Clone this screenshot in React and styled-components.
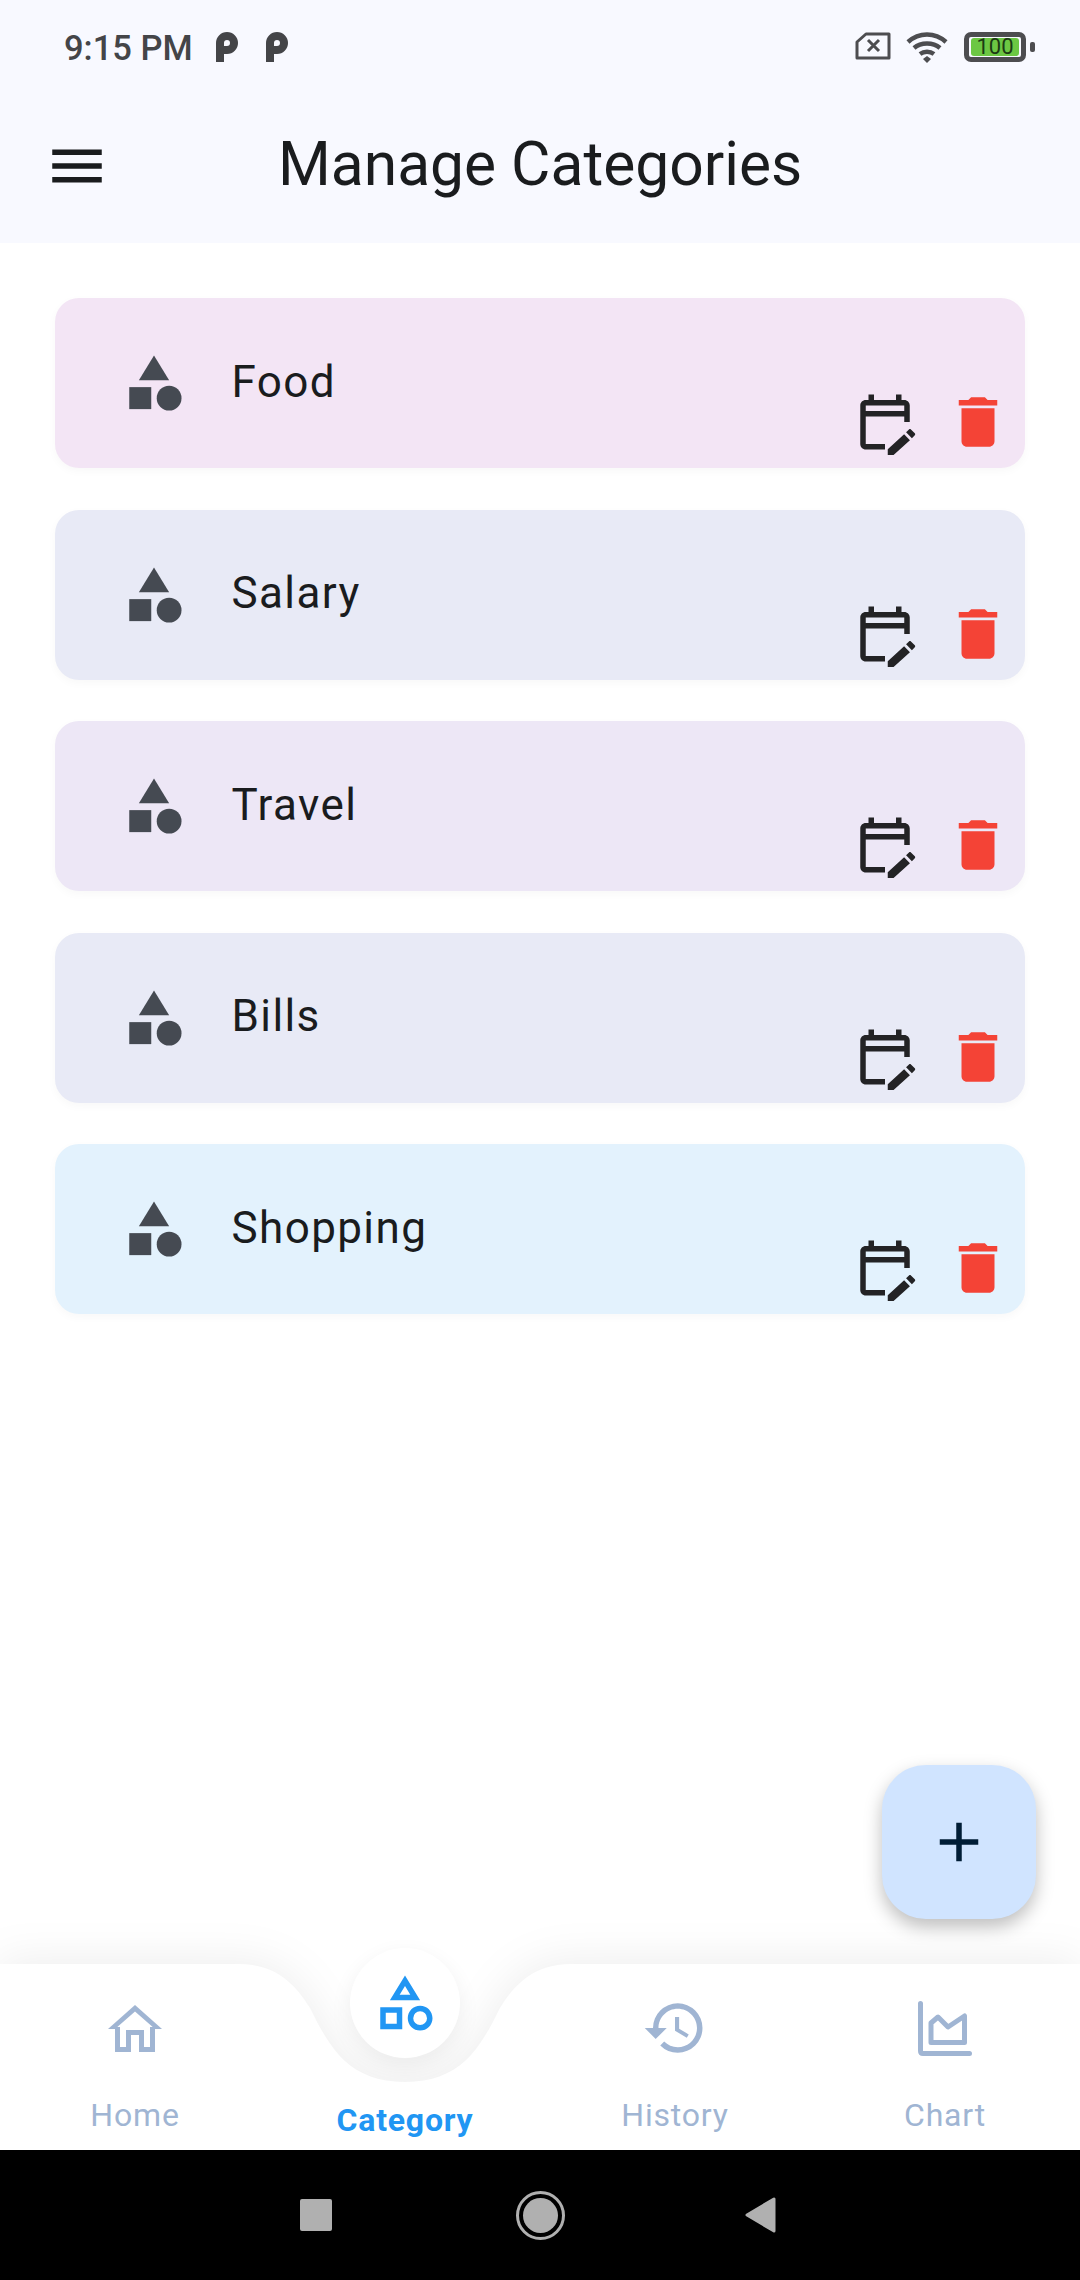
import styled, { createGlobalStyle } from "styled-components";
import {
  MdAdd,
  MdCategory,
  MdDelete,
  MdHistory,
  MdMenu,
  MdOutlineCategory,
} from "react-icons/md";

const GlobalStyle = createGlobalStyle`
  html, body {
    margin: 0;
    padding: 0;
    background: #fff;
  }
  * {
    box-sizing: border-box;
  }
`;

const Screen = styled.div`
  width: 1080px;
  height: 2280px;
  display: flex;
  flex-direction: column;
  overflow: hidden;
  font-family: Roboto, "Liberation Sans", sans-serif;
  background: #fff;
`;

const Header = styled.header`
  height: 243px;
  background: #f8f9ff;
  flex-shrink: 0;
`;

const StatusBar = styled.div`
  height: 88px;
  padding: 32px 47px 0 64px;
  display: flex;
  align-items: flex-start;
`;

const Time = styled.span`
  font-size: 34.5px;
  line-height: 32px;
  font-weight: 500;
  color: #444548;
  margin-right: 23px;
`;

const AppLogo = styled.svg`
  width: 22px;
  height: 30px;
  margin-right: 28px;
  flex-shrink: 0;
`;

const StatusIcons = styled.div`
  margin-left: auto;
  display: flex;
  align-items: flex-start;
  gap: 15px;
`;

const Battery = styled.div`
  position: relative;
  width: 62px;
  height: 30px;
  border: 5px solid #4d4d50;
  border-radius: 7px;
  margin-left: 1px;
  margin-right: 7px;
  padding: 1px 2px;
  display: flex;

  &::after {
    content: "";
    position: absolute;
    right: -14px;
    top: 5px;
    width: 5px;
    height: 10px;
    border-radius: 2px;
    background: #4d4d50;
  }
`;

const BatteryLevel = styled.div`
  flex: 1;
  background: #6cc743;
  border-radius: 3px;
  color: #1c3a14;
  font-size: 22px;
  line-height: 18px;
  text-align: center;
`;

const AppBar = styled.div`
  height: 155px;
  padding-left: 44px;
  display: flex;
  align-items: center;
  color: #1a1c1e;
  font-size: 66px;
`;

const MenuIcon = styled(MdMenu)`
  flex-shrink: 0;
`;

const Title = styled.h1`
  margin: 0 0 2px 168px;
  font-size: 60.5px;
  line-height: 80px;
  font-weight: 400;
  color: #1a1c1e;
`;

const Main = styled.main`
  position: relative;
  flex: 1;
  padding: 55px 55px 0;
  display: flex;
  flex-direction: column;
  gap: 41.5px;
`;

const Card = styled.div`
  height: 170px;
  flex-shrink: 0;
  padding: 0 14px 0 66px;
  display: flex;
  align-items: center;
  border-radius: 24px;
  background: ${(p) => p.$bg};
  box-shadow: 0 3px 10px rgba(0, 0, 0, 0.03);
`;

const CardIcon = styled(MdCategory)`
  color: #454a52;
  font-size: 66px;
  flex-shrink: 0;
`;

const CardName = styled.span`
  margin: 0 0 3px 44.5px;
  font-size: 44px;
  line-height: 60px;
  letter-spacing: 1.4px;
  color: #1a1c1e;
`;

const Actions = styled.div`
  margin-left: auto;
  align-self: flex-end;
  padding-bottom: 13px;
  display: flex;
  gap: 27px;
`;

const EditIcon = styled.svg`
  width: 66px;
  height: 66px;
  fill: #232325;
  display: block;
`;

const DeleteIcon = styled(MdDelete)`
  font-size: 66px;
  color: #f44336;
  display: block;
`;

const Fab = styled.button`
  position: absolute;
  right: 44px;
  bottom: 45px;
  width: 154px;
  height: 154px;
  border: 0;
  padding: 0;
  border-radius: 44px;
  background: #d0e4ff;
  color: #001d36;
  font-size: 66px;
  display: flex;
  align-items: center;
  justify-content: center;
  box-shadow: 0 8px 18px rgba(0, 0, 0, 0.26);
`;

const NavBar = styled.nav`
  position: relative;
  height: 186px;
  flex-shrink: 0;
  display: grid;
  grid-template-columns: repeat(4, 270px);
`;

const NavShape = styled.svg`
  position: absolute;
  left: 0;
  top: 0;
  width: 1080px;
  height: 186px;
  overflow: visible;
  filter: drop-shadow(0 -3px 22px rgba(0, 0, 0, 0.07));
`;

const NavItem = styled.div`
  position: relative;
  display: flex;
  flex-direction: column;
  align-items: center;
  padding-top: ${(p) => (p.$active ? "0" : "31px")};
`;

const NavIconBox = styled.div`
  width: 66px;
  height: 66px;
  display: flex;
  align-items: center;
  justify-content: center;
  color: #a0b5d3;
  font-size: 66px;
`;

const Bubble = styled.div`
  width: 110px;
  height: 110px;
  margin-top: -16px;
  border-radius: 50%;
  background: #fff;
  color: #2196f3;
  font-size: 66px;
  display: flex;
  align-items: center;
  justify-content: center;
  box-shadow: 0 8px 22px rgba(0, 0, 0, 0.07);
`;

const NavLabel = styled.span`
  margin-top: ${(p) => (p.$active ? "44px" : "36px")};
  font-size: 32px;
  line-height: 36px;
  letter-spacing: 0.8px;
  font-weight: ${(p) => (p.$active ? 700 : 400)};
  color: ${(p) => (p.$active ? "#2196f3" : "#a0b5d3")};
`;

const SystemBar = styled.div`
  height: 130px;
  flex-shrink: 0;
  background: #000;
  display: flex;
  align-items: center;
  padding-left: 300px;
`;

const RecentsKey = styled.div`
  width: 32px;
  height: 32px;
  border-radius: 2px;
  background: #b0b0b0;
`;

const HomeKey = styled.div`
  width: 49px;
  height: 49px;
  margin-left: 184px;
  border: 3px solid #b0b0b0;
  border-radius: 50%;
  padding: 4px;

  &::after {
    content: "";
    display: block;
    width: 100%;
    height: 100%;
    border-radius: 50%;
    background: #b0b0b0;
  }
`;

const BackKey = styled.svg`
  width: 31px;
  height: 36px;
  margin-left: 180px;
`;

const CATEGORIES = [
  { name: "Food", bg: "#f3e5f5" },
  { name: "Salary", bg: "#e8eaf6" },
  { name: "Travel", bg: "#ede7f6" },
  { name: "Bills", bg: "#e8eaf6" },
  { name: "Shopping", bg: "#e3f2fd" },
];

const NOTCH_PATH =
  "M0 0H238C278 0 296 22 310 44C330 85 350 118 405 118C460 118 480 85 500 44C514 22 532 0 572 0H1080V186H0Z";

const EDIT_CALENDAR_PATH =
  "M5 10h14v2h2V6c0-1.1-.9-2-2-2h-1V2h-2v2H8V2H6v2H5c-1.11 0-1.99.9-1.99 2L3 20c0 1.1.89 2 2 2h7v-2H5V10zm0-4h14v2H5V6zm17.84 10.83l-1.06 1.06-2.12-2.12 1.06-1.06c.2-.2.51-.2.71 0l1.41 1.41c.2.2.2.51 0 .71zm-3.89-.35l2.12 2.12L15.12 24H13v-2.12l5.95-5.4z";

const Logo = () => (
  <AppLogo viewBox="0 0 22 30">
    <path
      d="M4 30V11a7 7 0 1 1 7 7H8"
      fill="none"
      stroke="#444548"
      strokeWidth="8"
    />
  </AppLogo>
);

const SimIcon = () => (
  <svg width="36" height="28" viewBox="0 0 36 28">
    <path
      d="M11 2H34V26H2V10Z"
      fill="none"
      stroke="#4d4d50"
      strokeWidth="3"
      strokeLinejoin="round"
    />
    <path
      d="M13 8L24 19M24 8L13 19"
      stroke="#4d4d50"
      strokeWidth="3"
      fill="none"
    />
  </svg>
);

const WifiIcon = () => (
  <svg width="42" height="31" viewBox="0 0 42 31">
    <g fill="none" stroke="#4d4d50" strokeWidth="4.5">
      <path d="M2 10C13 0 29 0 40 10" />
      <path d="M8 16C15 10 27 10 34 16" />
      <path d="M14 22C18 19 24 19 28 22" />
    </g>
    <path d="M17 27L21 24L25 27L21 31Z" fill="#4d4d50" />
  </svg>
);

const HomeIcon = () => (
  <svg width="54" height="47" viewBox="0 0 54 47">
    <path d="M27 0L54 24H47L27 6.5L7 24H0Z" fill="currentColor" />
    <path
      d="M9.5 22V44.5H20.5V27.5H33.5V44.5H44.5V22"
      fill="none"
      stroke="currentColor"
      strokeWidth="5"
    />
  </svg>
);

const ChartIcon = () => (
  <svg width="54" height="55" viewBox="0 0 54 55">
    <g
      fill="none"
      stroke="currentColor"
      strokeWidth="5"
      strokeLinecap="round"
      strokeLinejoin="round"
    >
      <path d="M2.5 2.5V50C2.5 51.5 3.5 52.5 5 52.5H51.5" />
      <path d="M13 41.5V22L20 16L30 26L46.5 15V41.5Z" />
    </g>
  </svg>
);

const NAV_ITEMS = [
  { label: "Home", icon: <HomeIcon /> },
  { label: "Category", icon: <MdOutlineCategory />, active: true },
  { label: "History", icon: <MdHistory /> },
  { label: "Chart", icon: <ChartIcon /> },
];

const App = () => {
  return (
    <>
      <GlobalStyle />
      <Screen>
        <Header>
          <StatusBar>
            <Time>9:15 PM</Time>
            <Logo />
            <Logo />
            <StatusIcons>
              <SimIcon />
              <WifiIcon />
              <Battery>
                <BatteryLevel>100</BatteryLevel>
              </Battery>
            </StatusIcons>
          </StatusBar>
          <AppBar>
            <MenuIcon />
            <Title>Manage Categories</Title>
          </AppBar>
        </Header>
        <Main>
          {CATEGORIES.map((item) => (
            <Card key={item.name} $bg={item.bg}>
              <CardIcon />
              <CardName>{item.name}</CardName>
              <Actions>
                <EditIcon viewBox="0 0 24 24">
                  <path fillRule="evenodd" d={EDIT_CALENDAR_PATH} />
                </EditIcon>
                <DeleteIcon />
              </Actions>
            </Card>
          ))}
          <Fab>
            <MdAdd />
          </Fab>
        </Main>
        <NavBar>
          <NavShape viewBox="0 0 1080 186">
            <path d={NOTCH_PATH} fill="#fff" />
          </NavShape>
          {NAV_ITEMS.map((item) => (
            <NavItem key={item.label} $active={item.active}>
              {item.active ? (
                <Bubble>{item.icon}</Bubble>
              ) : (
                <NavIconBox>{item.icon}</NavIconBox>
              )}
              <NavLabel $active={item.active}>{item.label}</NavLabel>
            </NavItem>
          ))}
        </NavBar>
        <SystemBar>
          <RecentsKey />
          <HomeKey />
          <BackKey viewBox="0 0 31 36">
            <path
              d="M2 18L29 2V34Z"
              fill="#b0b0b0"
              stroke="#b0b0b0"
              strokeWidth="3"
              strokeLinejoin="round"
            />
          </BackKey>
        </SystemBar>
      </Screen>
    </>
  );
};

export default App;
